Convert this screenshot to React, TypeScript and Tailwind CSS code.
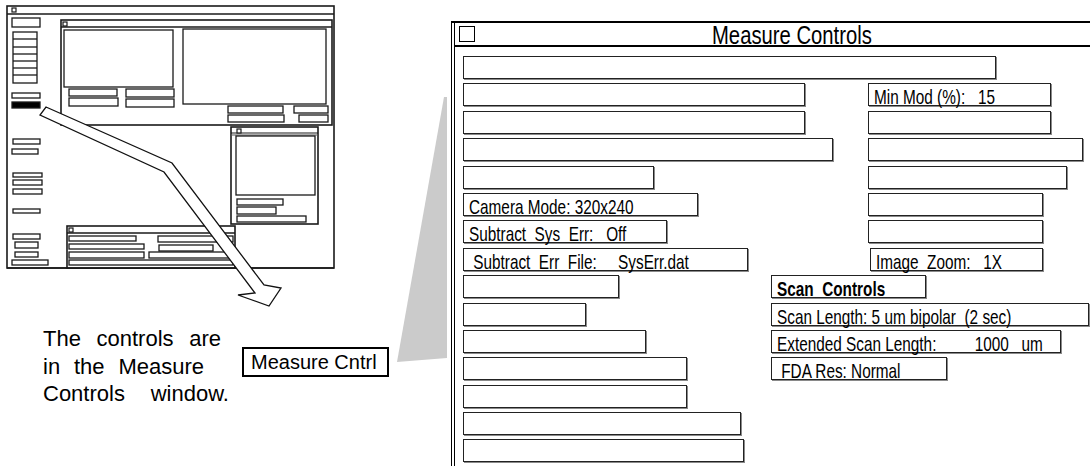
import React from "react";

type R4 = [number, number, number, number];

const thinBoxes: R4[] = [
  // left panel of the miniature screen
  [12, 18, 40, 27],
  [12, 93, 40, 98],
  [13, 139, 40, 144],
  [12, 149, 38, 154],
  [13, 173, 42, 177],
  [13, 180, 42, 185],
  [13, 189, 42, 194],
  [13, 209, 40, 213],
  [13, 234, 40, 239],
  [15, 242, 38, 248],
  [15, 252, 38, 257],
  [12, 260, 48, 265],
  // upper window contents
  [64, 30, 173, 87],
  [69, 89, 117, 96],
  [69, 98, 118, 106],
  [126, 89, 174, 97],
  [126, 99, 174, 107],
  [183, 29, 326, 104],
  [228, 106, 283, 113],
  [228, 115, 284, 122],
  [294, 106, 328, 113],
  [299, 115, 328, 122],
  // small window contents
  [236, 136, 315, 195],
  [237, 199, 283, 205],
  [237, 207, 276, 214],
  [237, 216, 306, 222],
  // bottom window contents
  [69, 236, 136, 241],
  [69, 244, 144, 249],
  [69, 252, 144, 258],
  [69, 260, 233, 265],
  [158, 236, 233, 242],
  [159, 245, 213, 251],
  [149, 252, 232, 258],
];

function Rect({ r, w = 1.3, fill = "white" }: { r: R4; w?: number; fill?: string }) {
  return (
    <rect
      x={r[0]}
      y={r[1]}
      width={r[2] - r[0]}
      height={r[3] - r[1]}
      fill={fill}
      stroke="#1a1a1a"
      strokeWidth={w}
    />
  );
}

function MiniScreen() {
  return (
    <svg className="absolute left-0 top-0" width={451} height={466} viewBox="0 0 451 466">
      {/* outer frame */}
      <Rect r={[7, 6, 334, 268]} w={1.6} />
      <line x1={7} y1={14} x2={334} y2={14} stroke="#1a1a1a" strokeWidth={1.6} />
      <Rect r={[12, 8, 16, 12]} w={1.2} />
      {/* stack of seven */}
      <Rect r={[13, 32, 37, 83]} />
      {[39, 47, 54, 61, 68, 75].map((y) => (
        <line key={y} x1={13} y1={y} x2={37} y2={y} stroke="#1a1a1a" strokeWidth={1.3} />
      ))}
      <Rect r={[12, 102, 40, 108]} fill="#000" />
      {/* upper window */}
      <Rect r={[61, 20, 332, 125]} w={1.6} />
      <line x1={61} y1={27} x2={332} y2={27} stroke="#1a1a1a" strokeWidth={1.6} />
      <Rect r={[63, 22, 67, 26]} w={1.2} />
      {/* small window */}
      <Rect r={[231, 127, 318, 224]} w={1.6} />
      <line x1={231} y1={133} x2={318} y2={133} stroke="#1a1a1a" strokeWidth={1.2} />
      <line x1={231} y1={135} x2={318} y2={135} stroke="#555" strokeWidth={1.2} />
      <Rect r={[237, 129, 241, 133]} w={1.2} />
      {/* bottom window */}
      <Rect r={[67, 226, 235, 268]} w={1.6} />
      <line x1={67} y1={233} x2={235} y2={233} stroke="#1a1a1a" strokeWidth={1.4} />
      <Rect r={[69, 228, 73, 232]} w={1.2} />
      {thinBoxes.map((r, i) => (
        <Rect key={i} r={r} />
      ))}
      <line x1={7} y1={268} x2={334} y2={268} stroke="#1a1a1a" strokeWidth={1.6} />
      {/* hollow arrow */}
      <polygon
        points="46,107 172,163 264,285 281,288 269,306 238,295 255,293 164,172 40,115"
        fill="white"
        stroke="#111"
        strokeWidth={1.3}
        strokeLinejoin="miter"
      />
      {/* grey zoom wedge */}
      <polygon points="444,97 447,97 447,358 397,362" fill="#cbcbcb" />
    </svg>
  );
}

type Row = {
  lw: string;
  lt?: string;
  cell?: string;
  rw?: string;
  rt?: string;
  bold?: boolean;
};

const rows: Row[] = [
  { lw: "w-[533px]" },
  { lw: "w-[342px]", cell: "w-[405px]", rw: "w-[183px]", rt: "Min Mod (%):   15" },
  { lw: "w-[342px]", cell: "w-[405px]", rw: "w-[183px]" },
  { lw: "w-[370px]", cell: "w-[405px]", rw: "w-[215px]" },
  { lw: "w-[191px]", cell: "w-[405px]", rw: "w-[199px]" },
  { lw: "w-[235px]", lt: "Camera Mode: 320x240", cell: "w-[405px]", rw: "w-[175px]" },
  { lw: "w-[204px]", lt: "Subtract  Sys  Err:   Off", cell: "w-[405px]", rw: "w-[175px]" },
  { lw: "w-[285px]", lt: " Subtract  Err  File:     SysErr.dat", cell: "w-[407px]", rw: "w-[173px]", rt: "Image  Zoom:   1X" },
  { lw: "w-[156px]", cell: "w-[308px]", rw: "w-[155px]", rt: "Scan  Controls", bold: true },
  { lw: "w-[123px]", cell: "w-[308px]", rw: "w-[318px]", rt: "Scan Length: 5 um bipolar  (2 sec)" },
  { lw: "w-[183px]", cell: "w-[308px]", rw: "w-[290px]", rt: "Extended Scan Length:         1000   um" },
  { lw: "w-[224px]", cell: "w-[308px]", rw: "w-[176px]", rt: " FDA Res: Normal" },
  { lw: "w-[224px]" },
  { lw: "w-[278px]" },
  { lw: "w-[281px]" },
];

function Field({ w, text, bold }: { w: string; text?: string; bold?: boolean }) {
  return (
    <div className={`${w} h-[23px] shrink-0 border border-[#222] shadow-[1px_1px_0_#8a8a8a] pl-[5px] overflow-visible`}>
      {text ? (
        <span
          className={`block origin-left scale-x-[0.73] whitespace-pre text-[21px] leading-[25px] ${
            bold ? "font-bold" : ""
          }`}
        >
          {text}
        </span>
      ) : null}
    </div>
  );
}

export default function App() {
  return (
    <div className="flex w-[1090px] h-[466px] overflow-hidden bg-white text-black [font-family:'Liberation_Sans',Arial,sans-serif]">
      {/* left: miniature screen and caption */}
      <div className="relative w-[451px] h-[466px] shrink-0">
        <MiniScreen />
        <div className="absolute left-[43px] top-[325px] text-[22px] leading-[27.7px]">
          <div className="flex w-[178px] justify-between">
            <span>The</span>
            <span>controls</span>
            <span>are</span>
          </div>
          <div className="flex w-[161px] justify-between">
            <span>in</span>
            <span>the</span>
            <span>Measure</span>
          </div>
          <div className="flex w-[186px] justify-between">
            <span>Controls</span>
            <span>window.</span>
          </div>
        </div>
        <div className="absolute left-[242px] top-[347px] w-[147px] h-[30px] border-2 border-black pl-[7px] text-[20px] leading-[27px]">
          Measure Cntrl
        </div>
      </div>

      {/* right: Measure Controls window */}
      <div className="flex-1 pt-[21px]">
        <div className="h-full border-t-2 border-l border-black">
          <div className="ml-[2px] h-full border-l border-black">
            <div className="flex h-[24px] items-start border-b-2 border-black">
              <div className="ml-[4px] mt-[3px] h-[16px] w-[16px] shrink-0 border border-black" />
              <span className="ml-[237px] block origin-left scale-x-[0.81] whitespace-nowrap text-[25px] leading-[24px]">
                Measure Controls
              </span>
            </div>
            <div className="flex flex-col gap-[4.4px] pl-[8px] pt-[9px]">
              {rows.map((r, i) => (
                <div key={i} className="flex h-[23px]">
                  {r.cell ? (
                    <div className={`${r.cell} shrink-0`}>
                      <Field w={r.lw} text={r.lt} />
                    </div>
                  ) : (
                    <Field w={r.lw} text={r.lt} />
                  )}
                  {r.rw ? <Field w={r.rw} text={r.rt} bold={r.bold} /> : null}
                </div>
              ))}
            </div>
          </div>
        </div>
      </div>
    </div>
  );
}
